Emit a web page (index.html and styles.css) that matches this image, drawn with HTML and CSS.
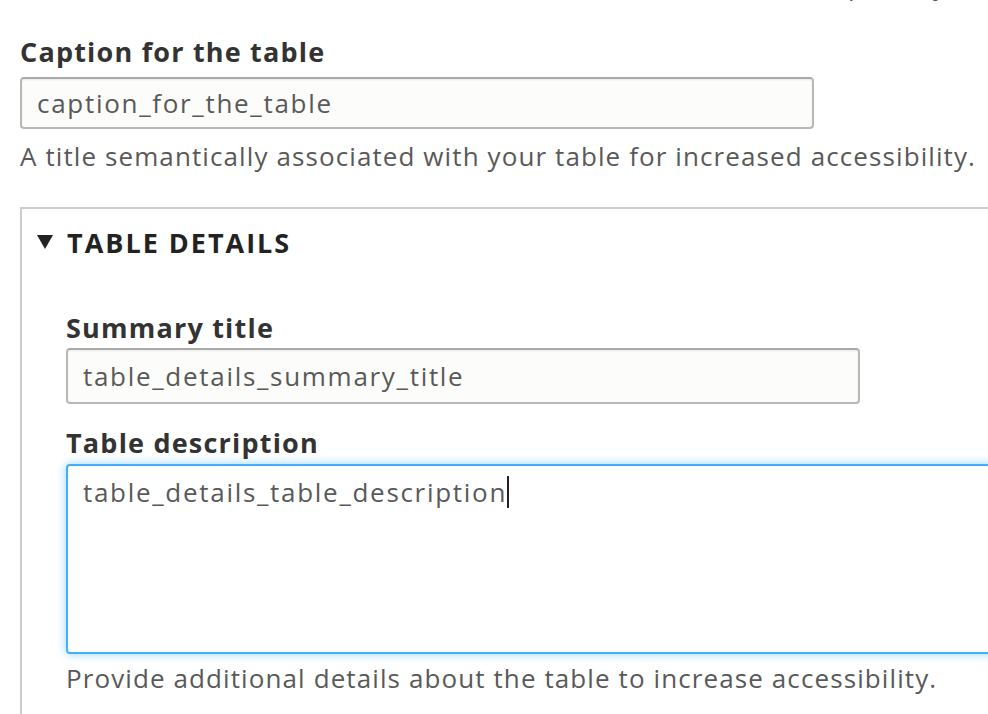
FILE: index.html
```html
<!DOCTYPE html>
<html lang="en">
<head>
  <meta charset="UTF-8" />
  <meta name="viewport" content="width=device-width, initial-scale=1">
  <title>Table settings</title>
  <link rel="stylesheet" href="styles.css">
</head>

<body>
  <div class="form">
    <div class="prev-desc">
      <p>Use this to describe the rows and columns of the table in a simple way, for example the key values.</p>
    </div>

    <div class="form-item">
      <label for="caption">Caption for the table</label>
      <input type="text" id="caption" class="form-text" value="caption_for_the_table" />
      <div class="description">A title semantically associated with your table for increased accessibility.</div>
    </div>

    <div class="details">
      <div class="summary"><span class="arrow"></span>Table details</div>

      <div class="details-wrapper">
        <div class="form-item">
          <label for="summary-title">Summary title</label>
          <input type="text" id="summary-title" class="form-text short" value="table_details_summary_title" />
        </div>

        <div class="form-item">
          <label for="table-desc">Table description</label>
          <div class="textarea focus">table_details_table_description<span class="caret"></span></div>
          <div class="description">Provide additional details about the table to increase accessibility.</div>
        </div>
      </div>
    </div>
  </div>
</body>
</html>
```

FILE: styles.css
```css
body {
  margin: 0;
  font-family: "Open Sans", "DejaVu Sans", sans-serif;
  color: #333;
  background: #fff;
  overflow: hidden;
}

.form {
  padding-left: 20px;
}

.prev-desc {
  height: 4px;
  overflow: hidden;
}

.prev-desc p {
  margin: -33px 0 0;
  font-size: 26px;
  line-height: 36px;
  letter-spacing: 1.1px;
  color: #595959;
  white-space: nowrap;
}

.form-item {
  margin-top: 30px;
}

label {
  display: block;
  font-size: 27px;
  font-weight: bold;
  line-height: 36px;
  letter-spacing: 1.2px;
  color: #333;
}

.form-text {
  display: block;
  box-sizing: border-box;
  width: 794px;
  height: 52px;
  margin-top: 7px;
  padding: 0 15px;
  font-family: inherit;
  font-size: 26px;
  letter-spacing: 1.7px;
  color: #595959;
  background: #fcfcfa;
  border: 2px solid #b8b8b8;
  border-top-color: #a9a9a9;
  border-radius: 4px;
  box-shadow: inset 0 1px 2px rgba(0, 0, 0, 0.08);
  outline: none;
}

.form-text.short {
  height: 56px;
  margin-top: 2px;
}

.description {
  margin-top: 9px;
  font-size: 26px;
  line-height: 36px;
  letter-spacing: 1.1px;
  color: #595959;
  white-space: nowrap;
}

.details {
  margin-top: 33px;
  border-top: 2px solid #ccc;
  border-left: 2px solid #ccc;
  padding: 0 0 40px 15px;
}

.summary {
  display: flex;
  align-items: center;
  height: 66px;
  font-size: 27px;
  font-weight: bold;
  letter-spacing: 2px;
  text-transform: uppercase;
  color: #222;
}

.arrow {
  width: 0;
  height: 0;
  margin-right: 14px;
  border-left: 8px solid transparent;
  border-right: 8px solid transparent;
  border-top: 14px solid #222;
}

.details-wrapper {
  padding-left: 29px;
  padding-top: 23px;
}

.details-wrapper .form-item {
  margin-top: 21px;
}

.details-wrapper .form-item:first-child {
  margin-top: 12px;
}

.textarea {
  box-sizing: border-box;
  width: 960px;
  height: 190px;
  margin-top: 3px;
  padding: 8px 15px;
  font-size: 26px;
  line-height: 36px;
  letter-spacing: 1.7px;
  color: #595959;
  background: #fff;
  border: 2px solid #40b0fa;
  border-radius: 4px;
  box-shadow: 0 0 10px rgba(64, 176, 250, 0.55);
}

.caret {
  display: inline-block;
  width: 2px;
  height: 32px;
  vertical-align: -6px;
  background: #222;
}

.details-wrapper .description {
  margin-top: 6px;
}
```
